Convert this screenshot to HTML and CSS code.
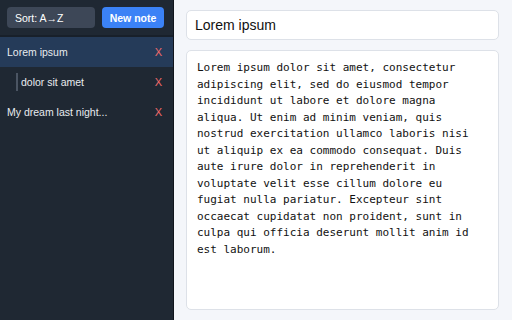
FILE: index.html
```html
<html lang="en"><head>
<meta charset="UTF-8">
<meta name="viewport" content="width=device-width, initial-scale=1.0">
<title>Notes</title>
<link rel="stylesheet" href="styles.css">
</head>
<body>
<div class="app">
<div class="sidebar">
<div class="head">
<button class="sort">Sort: A&rarr;Z</button>
<button class="newnote">New note</button>
</div>
<div class="notes">
<div class="note active"><span class="name">Lorem ipsum</span><span class="del">X</span></div>
<div class="note"><span class="name child">dolor sit amet</span><span class="del">X</span></div>
<div class="note"><span class="name">My dream last night...</span><span class="del">X</span></div>
</div>
</div>
<div class="editor">
<input type="text" class="title" value="Lorem ipsum">
<textarea class="body">Lorem ipsum dolor sit amet, consectetur adipiscing elit, sed do eiusmod tempor incididunt ut labore et dolore magna aliqua. Ut enim ad minim veniam, quis nostrud exercitation ullamco laboris nisi ut aliquip ex ea commodo consequat. Duis aute irure dolor in reprehenderit in voluptate velit esse cillum dolore eu fugiat nulla pariatur. Excepteur sint occaecat cupidatat non proident, sunt in culpa qui officia deserunt mollit anim id est laborum.</textarea>
</div>
</div>
</body></html>
```

FILE: styles.css
```css
body {
	margin: 0;
	font-family: "Liberation Sans", Arial, sans-serif;
}

.app {
	display: flex;
	height: 320px;
}

.sidebar {
	width: 173px;
	background: #1f2833;
	border-right: 1px solid #10151c;
	color: #e8ebef;
}

.head {
	display: flex;
	gap: 7px;
	padding: 7px 7px 0 7px;
	height: 28px;
	border-bottom: 2px solid #18202a;
}

.head button {
	height: 21px;
	border: none;
	border-radius: 4px;
	font-family: "Liberation Sans", Arial, sans-serif;
	font-size: 10.5px;
	color: #ffffff;
}

.sort {
	width: 88px;
	text-align: left;
	padding: 0 0 0 8px;
	background: #3d4757;
	color: #e5e8ec;
}

.newnote {
	width: 62px;
	padding: 0;
	background: #3b82f6;
	font-weight: bold;
}

.note {
	display: flex;
	justify-content: space-between;
	align-items: center;
	height: 30px;
	padding: 0 11px 0 7px;
	font-size: 10.5px;
}

.note.active {
	background: #253b59;
}

.name.child {
	margin-left: 9px;
	border-left: 2px solid #4b5563;
	padding: 3px 0 3px 3px;
}

.del {
	color: #f26b6b;
	font-size: 11px;
}

.editor {
	flex: 1;
	display: flex;
	flex-direction: column;
	gap: 10px;
	padding: 10px 13px 10px 12px;
	background: #f4f6fa;
}

.title {
	height: 30px;
	box-sizing: border-box;
	border: 1px solid #dde1e8;
	border-radius: 5px;
	padding: 0 8px;
	font-family: "Liberation Sans", Arial, sans-serif;
	font-size: 14px;
	color: #111;
	background: #fff;
	outline: none;
}

.body {
	flex: 1;
	resize: none;
	border: 1px solid #dde1e8;
	border-radius: 5px;
	padding: 9px 10px;
	font-family: "DejaVu Sans Mono", monospace;
	font-size: 11px;
	line-height: 16.5px;
	color: #111;
	background: #fff;
	outline: none;
	overflow: hidden;
}
```
